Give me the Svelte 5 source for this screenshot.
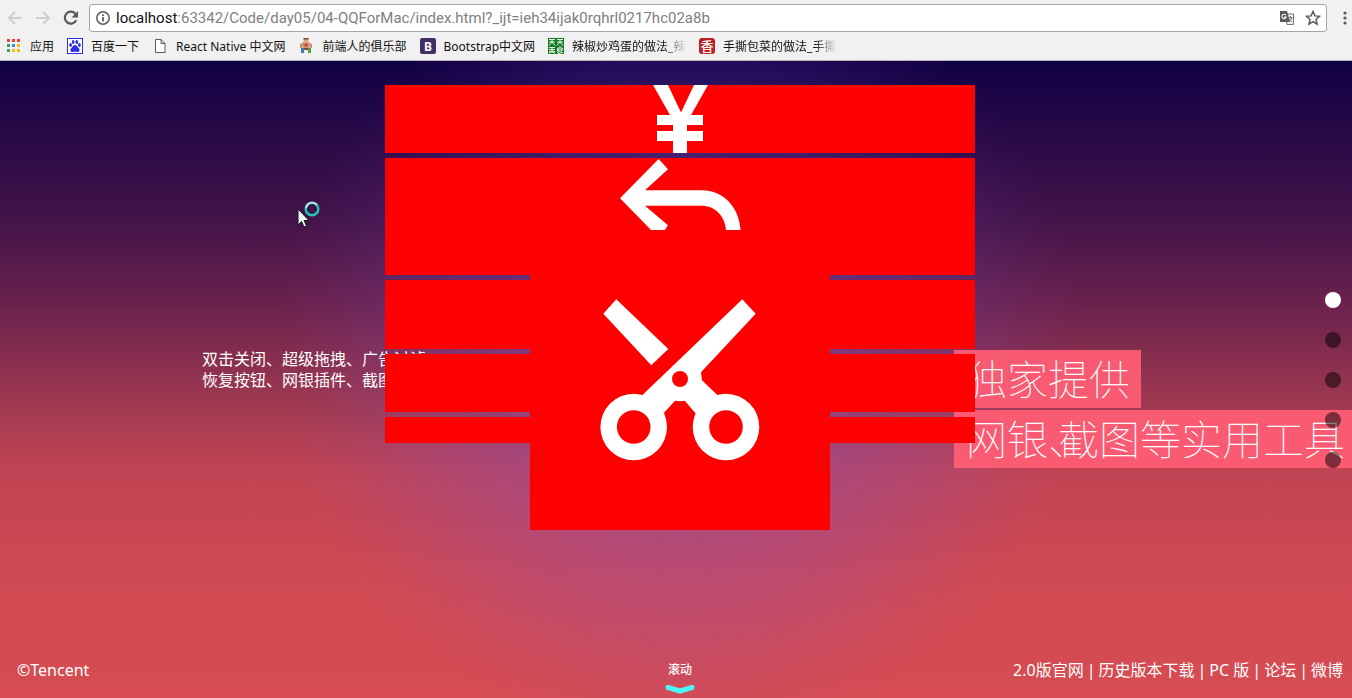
<script>
  let active = $state(0);
  const address = { host: 'localhost', rest: ':63342/Code/day05/04-QQForMac/index.html?_ijt=ieh34ijak0rqhrl0217hc02a8b' };
  const bookmarks = [
    { icon: 'apps', label: '应用' },
    { icon: 'paw', label: '百度一下' },
    { icon: 'file', label: 'React Native 中文网' },
    { icon: 'person', label: '前端人的俱乐部' },
    { icon: 'bootstrap', label: 'Bootstrap中文网' },
    { icon: 'food', label: '辣椒炒鸡蛋的做法_辣', fade: true },
    { icon: 'xiang', label: '手撕包菜的做法_手撕', fade: true }
  ];
  const appColors = ['#ea4335', '#ea4335', '#ea4335', '#34a853', '#4285f4', '#fbbc05', '#34a853', '#fbbc05', '#fbbc05'];
  const links = ['2.0版官网', '历史版本下载', 'PC 版', '论坛', '微博'];
</script>

<div class="window">
  <header>
    <div class="toolbar">
      <button class="nav" aria-label="后退" disabled>
        <svg width="16" height="16" viewBox="0 0 16 16"><path d="M15 8H2M8 2L2 8l6 6" fill="none" stroke="#cfcfcf" stroke-width="2" /></svg>
      </button>
      <button class="nav" aria-label="前进" disabled>
        <svg width="16" height="16" viewBox="0 0 16 16"><path d="M1 8h13M8 2l6 6-6 6" fill="none" stroke="#cfcfcf" stroke-width="2" /></svg>
      </button>
      <button class="nav" aria-label="刷新">
        <svg width="16" height="16" viewBox="0 0 16 16"><path d="M13.2 10.2A6 6 0 1 1 12.6 4" fill="none" stroke="#5a5a5a" stroke-width="2.2" /><path d="M15 1v6.5H8.5z" fill="#5a5a5a" /></svg>
      </button>
      <div class="omnibox">
        <svg width="16" height="16" viewBox="0 0 16 16"><circle cx="8" cy="8" r="6.2" fill="none" stroke="#5a5a5a" stroke-width="1.5" /><path d="M8 7v4.5M8 4.2v1.7" stroke="#5a5a5a" stroke-width="1.7" /></svg>
        <a class="url" href="#top"><span>{address.host}</span>{address.rest}</a>
        <button aria-label="翻译">
          <svg width="16" height="16" viewBox="0 0 16 16"><path d="M6 4h8.5v10.5H8z" fill="#f1f1f1" stroke="#777" /><path d="M1 1h7l3 11H1z" fill="#5a5a5a" /><path d="M7 5.3A2.2 2.2 0 1 0 7.2 7H5" fill="none" stroke="#fff" stroke-width="1.1" /><path d="M9.5 7.5h4M11.5 6v1.5m1.3 0c-.4 2-1.4 3-2.6 4m0-2.8c.8 1.5 1.7 2.3 3 3" fill="none" stroke="#777" /></svg>
        </button>
        <button aria-label="收藏">
          <svg width="16" height="16" viewBox="0 0 16 16"><path d="M8 1.5l1.9 4.4 4.7.4-3.6 3.1 1.1 4.7L8 11.6l-4.1 2.5L5 9.4 1.4 6.3l4.7-.4z" fill="none" stroke="#5a5a5a" stroke-width="1.5" /></svg>
        </button>
      </div>
      <button class="more" aria-label="菜单">
        <svg width="4" height="16" viewBox="0 0 4 16"><g fill="#5a5a5a"><circle cx="2" cy="3" r="1.6" /><circle cx="2" cy="8" r="1.6" /><circle cx="2" cy="13" r="1.6" /></g></svg>
      </button>
    </div>
    <nav class="bookmarks">
      {#each bookmarks as b}
        <a href="#top">
          <svg width="16" height="16" viewBox="0 0 16 16">
            {#if b.icon === 'apps'}
              {#each appColors as c, i}
                <rect x={1 + (i % 3) * 5} y={1 + Math.floor(i / 3) * 5} width="3" height="3" fill={c} />
              {/each}
            {:else if b.icon === 'paw'}
              <rect x=".5" y=".5" width="15" height="15" fill="#fff" stroke="#2b32dc" />
              <g fill="#2b32dc"><ellipse cx="3.6" cy="7" rx="1.4" ry="1.9" /><ellipse cx="6.2" cy="4" rx="1.4" ry="1.9" /><ellipse cx="9.8" cy="4" rx="1.4" ry="1.9" /><ellipse cx="12.4" cy="7" rx="1.4" ry="1.9" /><path d="M8 7c2 0 2.4 2 4 3.5 1.3 1.7.2 3.7-1.5 3.5-1.6-.3-3.4-.3-5 0-1.7.2-2.8-1.8-1.5-3.5C5.600 9 6 7 8 7z" /></g>
            {:else if b.icon === 'file'}
              <path d="M3.500 1.500h5.500l4 4v9h-9.500zM9 1.500v4h4" fill="#fff" stroke="#5a5a5a" />
            {:else if b.icon === 'person'}
              <path d="M2 6l4-2h4l4 2v4h-2l-1-2v3H5V8l-1 2H2z" fill="#c99572" /><rect x="5.500" y="0" width="5" height="5" fill="#dca888" /><path d="M5.500 0h5v1.500h-5z" fill="#6d4b3e" /><path d="M8 5l2 2-2 2-2-2z" fill="#d43730" /><path d="M3 10h3v5H3z" fill="#3f78b8" /><path d="M10 10h3v5h-3z" fill="#5b9b48" /><path d="M6 10h4v2H6z" fill="#814c39" />
            {:else if b.icon === 'bootstrap'}
              <rect width="16" height="16" rx="2" fill="#432e68" /><text x="8" y="12.500" text-anchor="middle" font-size="12" font-weight="700" fill="#fff">B</text>
            {:else if b.icon === 'food'}
              <rect width="16" height="16" fill="#147a22" />
              <path d="M1 1.500h6M1 4h6M4 1.500V4L1 7.500M4 4l3 3.500M9 1.500h6M9 4h6M12 1.500V4L9 7.500M12 4l3 3.500M1 9.500h6M1 11.500h6M1 13.500h6M4 9v4.500l-3 2M4 13.500l3 2M12 8.500L9 11M12 8.500l3 2.500M10 11h4v2h-4zM10 11v4.500l5-1" fill="none" stroke="#fff" stroke-width=".9" />
            {:else}
              <rect width="16" height="16" rx="3" fill="#bd2024" /><text x="8" y="13" text-anchor="middle" font-size="13" font-weight="500" fill="#fff">香</text>
            {/if}
          </svg>
          <span class:fade={b.fade}>{b.label}</span>
        </a>
      {/each}
    </nav>
  </header>

  <main>
    <section class="stage">
      <p class="copy">双击关闭、超级拖拽、广告过滤<br />恢复按钮、网银插件、截图</p>
      <div class="stack">
        <div class="card yen">
          <svg width="60" height="68" viewBox="0 0 60 68"><path d="M3 0H18L31 27.500L44 0H58L41 30H53V40H37V46H53V56H37V68H23V56H7V46H23V40H7V30H20Z" fill="#fff" /></svg>
        </div>
        <div class="card back">
          <svg width="121" height="72" viewBox="0 0 121 72"><path d="M0 40.300L38.600 1L48 11.300L25 32.300H81.500C104 32.300 119.500 50 120.500 72H106C105 58 95 47.700 81.500 47.700H25L48 67.300L44.700 72H31Z" fill="#fff" /></svg>
        </div>
        <div class="card mid"></div>
        <div class="card low"></div>
        <div class="card last"></div>
        <div class="front">
          <svg width="160" height="162" viewBox="0 0 160 162">
            <g fill="#fff">
              <path d="M16.300 .3L3.300 14.700L51.300 66.300L68.300 50Z" />
              <path d="M142.300 .3L155.700 14.700L101 73.300L102 81.300L117.300 96L126 128L95.300 114L84.700 101.700Q80 102.600 75 101.700L64 113.700L34 128L42.700 95.700Z" />
              <circle cx="33.700" cy="128" r="33.300" /><circle cx="126" cy="128" r="33.300" />
            </g>
            <g fill="#f00"><circle cx="80" cy="80" r="8" /><circle cx="33.700" cy="128" r="16.800" /><circle cx="126" cy="128" r="16.800" /></g>
          </svg>
        </div>
      </div>
      <h1><span>独家提供</span><span>网银<i>、</i>截图等实用工具</span></h1>
    </section>

    <nav class="dots">
      {#each [0, 1, 2, 3, 4] as n}
        <button class:on={active === n} aria-label={'第' + (n + 1) + '屏'} onclick={() => (active = n)}></button>
      {/each}
    </nav>

    <footer>
      <span>©Tencent</span>
      <button class="scroll">滚动
        <svg width="30" height="9" viewBox="0 0 30 9"><path d="M3 2.500L15 6L27 2.500" fill="none" stroke="#4df5fa" stroke-width="5" stroke-linecap="round" stroke-linejoin="round" /></svg>
      </button>
      <div class="links">
        {#each links as l, i}{#if i}<span>|</span>{/if}<a href="#top">{l}</a>{/each}
      </div>
    </footer>

    <svg class="cursor" width="24" height="28" viewBox="0 0 24 28">
      <circle cx="15" cy="8" r="6.300" fill="none" stroke="#22c5bb" stroke-width="2.500" />
      <path d="M9 7a6.300 6.300 0 0 1 11-3" fill="none" stroke="#b9dce2" stroke-width="2" />
      <path d="M1 8v16l3.500-3.500L7 26l2.500-1-2.300-5.500H12z" fill="#eefaf6" stroke="#111" />
    </svg>
  </main>
</div>

<style>
  :global(body) { margin: 0; }
  .window {
    min-height: 100vh;
    display: flex;
    flex-direction: column;
    overflow: hidden;
    font-family: "Noto Sans", "Noto Sans CJK SC", sans-serif;
  }
  svg { display: block; flex: none; }
  a { color: inherit; text-decoration: none; }
  button { border: 0; padding: 0; background: none; font: inherit; color: inherit; }
  header { background: #f1f1f1; border-bottom: 1px solid #b4b4b4; }
  .toolbar { display: flex; align-items: center; padding: 4px 5px 0 7px; }
  .nav { margin-right: 12px; }
  .nav:nth-child(3) { margin-right: 10px; }
  .omnibox {
    flex: 1;
    display: flex;
    align-items: center;
    gap: 10px;
    height: 26px;
    padding: 0 5px;
    border: 1px solid #a6a6a6;
    border-radius: 3px;
    background: #fff;
  }
  .url { flex: 1; margin-left: -5px; font-family: Roboto, sans-serif; font-size: 15px; line-height: 26px; color: #808080; white-space: nowrap; }
  .url span { color: #111; }
  .more { margin-left: 16px; }
  .bookmarks { display: flex; align-items: center; gap: 13px; height: 28px; padding: 0 6px; font-size: 12px; color: #111; }
  .bookmarks a { display: flex; align-items: center; gap: 8px; white-space: nowrap; }
  .bookmarks .fade { width: 114px; overflow: hidden; -webkit-mask-image: linear-gradient(90deg, #000 80%, transparent); mask-image: linear-gradient(90deg, #000 80%, transparent); }
  main {
    position: relative;
    flex: 1;
    display: flex;
    flex-direction: column;
    justify-content: space-between;
    overflow: hidden;
    color: #fff;
    background:
      radial-gradient(circle 400px at 680px 45%, rgba(120, 80, 210, .42) 0%, rgba(120, 80, 210, .36) 35%, rgba(120, 80, 210, .17) 70%, rgba(120, 80, 210, .05) 88%, transparent 100%),
      linear-gradient(#110044 0%, #431449 25%, #6a224d 38%, #a03950 54%, #c04454 64%, #cf4952 80%, #d64c52 100%);
  }
  .stage { display: grid; grid-template-columns: 1fr 590px 1fr; align-items: start; padding: 24px 0 0 8px; }
  .copy { justify-self: end; margin: 264px -41px 0 0; font-size: 16px; line-height: 21px; white-space: nowrap; }
  .stack { position: relative; z-index: 1; display: flex; flex-direction: column; gap: 5px; }
  .card { display: flex; justify-content: center; background: #f00; }
  .yen { height: 68px; }
  .back { height: 117px; }
  .mid { height: 69px; }
  .low { height: 58px; }
  .last { height: 26px; }
  .front {
    position: absolute;
    top: 145px;
    left: 145px;
    width: 300px;
    height: 300px;
    display: flex;
    align-items: center;
    justify-content: center;
    background: #f00;
  }
  h1 {
    display: flex;
    flex-direction: column;
    align-items: flex-start;
    gap: 2px;
    min-width: 0;
    margin: 265px 0 0 -21px;
    font: 100 41px/54px "Noto Sans CJK SC", sans-serif;
    white-space: nowrap;
  }
  h1 span { padding: 0 11px 4px 12px; background: rgba(255, 94, 116, .93); }
  h1 i { display: inline-block; width: 10px; font-style: normal; }
  .dots { position: absolute; right: 11px; top: 50%; transform: translateY(-50%); z-index: 2; display: flex; flex-direction: column; gap: 24px; }
  .dots button { width: 16px; height: 16px; border-radius: 50%; background: rgba(0, 0, 0, .5); }
  .dots .on { background: #fff; }
  footer { display: grid; grid-template-columns: 1fr auto 1fr; align-items: start; padding: 0 9px 4px 17px; font-size: 16px; line-height: 24px; }
  .links { justify-self: end; white-space: nowrap; }
  .links span { margin: 0 3px; }
  .scroll { display: flex; flex-direction: column; align-items: center; gap: 3px; font-size: 12px; font-weight: 500; line-height: 24px; }
  .cursor { position: absolute; left: 297px; top: 140px; }
</style>
